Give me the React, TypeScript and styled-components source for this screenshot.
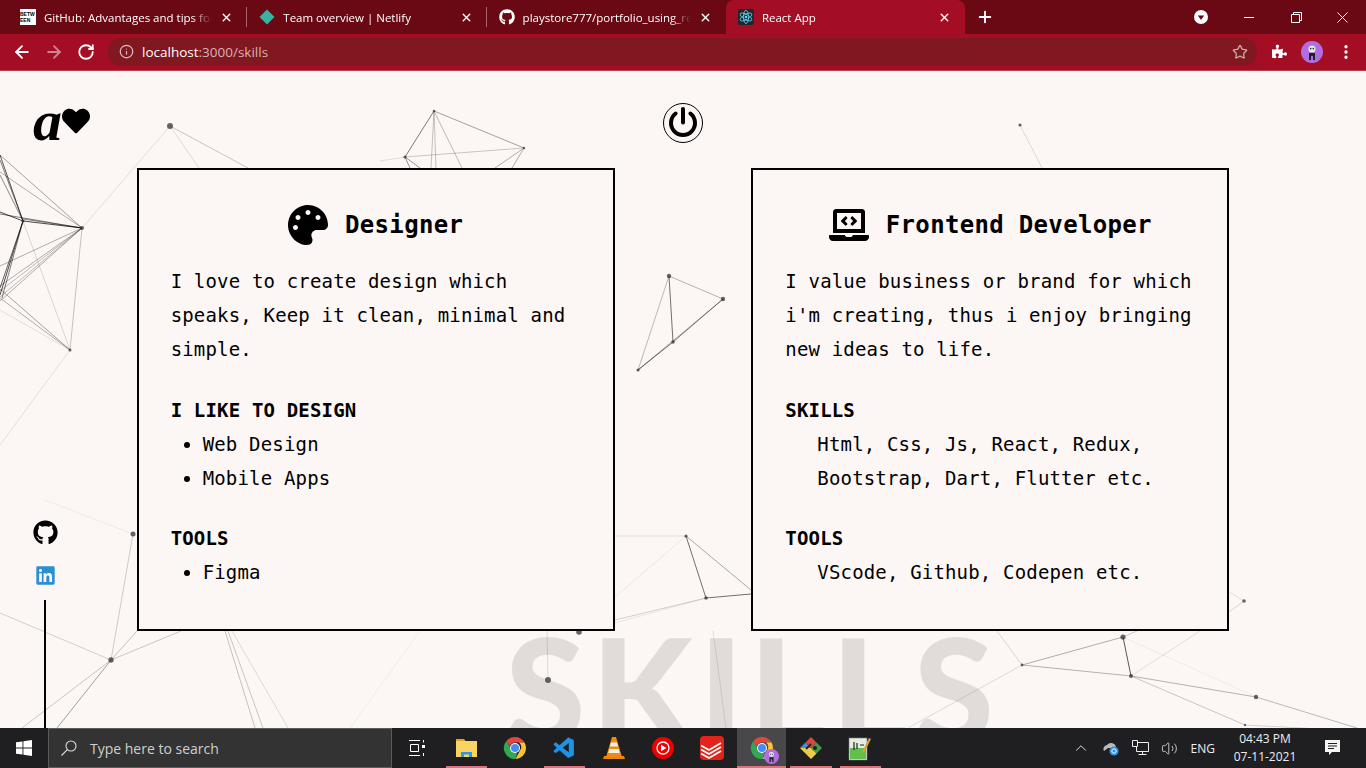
import React from "react";
import styled, { createGlobalStyle } from "styled-components";
import { ArrowLeft, ArrowRight, ChevronUp, Info, MoreVertical, Plus, RotateCw, Star, Volume2, X } from "lucide-react";
import { FaGithub, FaHeart, FaLaptopCode, FaLinkedin, FaPalette, FaPuzzlePiece } from "react-icons/fa";
import { VscVscode } from "react-icons/vsc";

const GlobalStyle = createGlobalStyle`
  html, body {
    margin: 0;
    padding: 0;
    height: 100%;
    overflow: hidden;
    background: #fcf6f4;
  }
  * {
    box-sizing: border-box;
  }
`;

// x1, y1, x2, y2, opacity (screen coordinates of the particle canvas)
const EDGES: number[][] = [
  [0, 155, 23, 221, 0.65], [0, 160, 23, 221, 0.5], [0, 175, 23, 221, 0.45], [0, 212, 23, 221, 0.7],
  [0, 214, 82, 228, 0.5], [23, 221, 82, 228, 0.7], [23, 219, 82, 228, 0.45], [0, 155, 82, 228, 0.35],
  [0, 172, 82, 228, 0.3], [23, 221, 0, 295, 0.7], [23, 221, 0, 288, 0.6], [23, 221, 2, 298, 0.5],
  [82, 228, 0, 266, 0.3], [82, 228, 0, 286, 0.3], [82, 228, 0, 291, 0.25], [82, 228, 0, 297, 0.25],
  [82, 228, 0, 301, 0.3], [0, 289, 70, 350, 0.35], [0, 298, 70, 350, 0.3], [0, 310, 70, 350, 0.1],
  [23, 221, 70, 350, 0.14], [82, 228, 70, 350, 0.22], [82, 228, 170, 126, 0.1], [70, 350, 0, 445, 0.1],
  [170, 126, 248, 168, 0.2], [170, 126, 199, 168, 0.12],
  [434, 111, 405, 157, 0.5], [434, 111, 524, 148, 0.35], [434, 111, 431, 168, 0.22], [434, 111, 436, 168, 0.22],
  [434, 111, 462, 168, 0.25], [405, 157, 524, 148, 0.2], [405, 157, 380, 161, 0.1], [405, 157, 420, 168, 0.4],
  [405, 157, 410, 168, 0.4], [524, 148, 495, 168, 0.3], [524, 148, 512, 168, 0.3],
  [669, 276, 723, 299, 0.28], [669, 276, 673, 342, 0.55], [723, 299, 673, 342, 0.5], [673, 342, 638, 370, 0.55],
  [669, 276, 638, 370, 0.25], [723, 299, 638, 370, 0.3],
  [1020, 125, 1042, 168, 0.12],
  [45, 500, 133, 534, 0.06], [133, 534, 111, 660, 0.18], [0, 613, 111, 660, 0.16], [111, 660, 137, 631, 0.22],
  [111, 660, 181, 631, 0.2], [111, 660, 22, 728, 0.2], [111, 660, 57, 728, 0.35],
  [225, 631, 255, 728, 0.22], [228, 631, 263, 728, 0.2], [232, 631, 288, 728, 0.12], [420, 631, 350, 728, 0.05],
  [548, 680, 547, 631, 0.12],
  [615, 536, 686, 536, 0.1], [686, 536, 706, 598, 0.55], [686, 536, 751, 590, 0.32], [706, 598, 751, 594, 0.55],
  [615, 620, 706, 598, 0.16], [615, 623, 706, 598, 0.08], [615, 597, 686, 536, 0.07], [713, 631, 726, 728, 0.1],
  [1123, 637, 1131, 676, 0.65], [1022, 665, 1123, 637, 0.3], [1022, 665, 1131, 676, 0.28], [1131, 676, 1256, 697, 0.28],
  [1131, 676, 1245, 725, 0.2], [1256, 697, 1357, 728, 0.25], [1245, 725, 1340, 730, 0.15], [1022, 665, 908, 728, 0.12],
  [1022, 665, 997, 631, 0.14], [1123, 637, 1256, 697, 0.05], [1131, 676, 1200, 631, 0.1], [1244, 601, 1229, 612, 0.14],
  [1229, 592, 1244, 601, 0.1], [1123, 637, 1137, 631, 0.18],
];

// x, y, radius
const NODES: number[][] = [
  [170, 126, 3], [82, 228, 2], [23, 221, 1.6], [70, 350, 1.5], [434, 111, 1.3], [405, 157, 1.6], [524, 148, 1.2],
  [669, 276, 2.2], [723, 299, 2.2], [673, 342, 1.8], [638, 370, 1.6], [1020, 125, 1.6], [133, 534, 2.5],
  [111, 660, 2.7], [579, 632, 2.8], [548, 680, 3], [686, 536, 1.6], [706, 598, 1.8], [1123, 637, 2.6],
  [1131, 676, 2], [1022, 665, 1.4], [1256, 697, 2.2], [1245, 725, 1.2], [1244, 601, 1.8],
];

const TABS = [
  { title: "GitHub: Advantages and tips for a", icon: "between" },
  { title: "Team overview | Netlify", icon: "netlify" },
  { title: "playstore777/portfolio_using_react", icon: "github" },
  { title: "React App", icon: "react", active: true },
];

function TabIcon({ name }: { name: string }) {
  if (name === "between") {
    return (
      <BetweenMark>
        <span>BETW</span>
        <span>EEN</span>
      </BetweenMark>
    );
  }
  if (name === "netlify") {
    return (
      <svg width="16" height="16" viewBox="0 0 16 16">
        <path d="M8 0.5 15.5 8 8 15.5 0.5 8z" fill="#37b3a3" />
      </svg>
    );
  }
  if (name === "github") {
    return <FaGithub size={16} color="#fff" />;
  }
  return (
    <svg width="16" height="16" viewBox="0 0 16 16">
      <rect width="16" height="16" rx="2" fill="#20262c" />
      <g fill="none" stroke="#5fd4f2" strokeWidth="0.8">
        <ellipse cx="8" cy="8" rx="2.6" ry="6.6" />
        <ellipse cx="8" cy="8" rx="2.6" ry="6.6" transform="rotate(60 8 8)" />
        <ellipse cx="8" cy="8" rx="2.6" ry="6.6" transform="rotate(120 8 8)" />
      </g>
      <circle cx="8" cy="8" r="1.3" fill="#5fd4f2" />
    </svg>
  );
}

function ChromeGlyph({ size = 24 }: { size?: number }) {
  return (
    <svg width={size} height={size} viewBox="0 0 24 24">
      <path d="M12 1a11 11 0 0 1 9.5 5.5H12a5.5 5.5 0 0 0-5.2 3.7L3.4 5A11 11 0 0 1 12 1z" fill="#e0483d" />
      <path d="M21.5 6.500a11 11 0 0 1-9 16.500l4.300-8.200a5.500 5.500 0 0 0-.8-8.300z" fill="#fbc52f" />
      <path d="M3.400 5l4.400 7.700a5.500 5.500 0 0 0 6.500 4.100L12.500 23A11 11 0 0 1 3.400 5z" fill="#33a853" />
      <circle cx="12" cy="12" r="5" fill="#fff" />
      <circle cx="12" cy="12" r="4" fill="#4b8bf5" />
    </svg>
  );
}

function Avatar({ size }: { size: number }) {
  return (
    <svg width={size} height={size} viewBox="0 0 22 22">
      <circle cx="11" cy="11" r="11" fill="#b06fe0" />
      <circle cx="11" cy="8" r="3.600" fill="#e8e4e4" />
      <circle cx="9.700" cy="7.600" r="0.800" fill="#222" />
      <circle cx="12.300" cy="7.600" r="0.800" fill="#222" />
      <path d="M8 12h6v7h-2v-4h-2v4H8z" fill="#222" />
    </svg>
  );
}

function AppIcon({ name }: { name: string }) {
  switch (name) {
    case "explorer":
      return (
        <svg width="24" height="24" viewBox="0 0 24 24">
          <path d="M2 3h8l2 2.500H2z" fill="#e0a21c" />
          <rect x="2" y="5" width="21" height="16" fill="#f9d364" />
          <path d="M7 21v-5h11v5h-3v-2.500h-5V21z" fill="#2f9ae0" />
        </svg>
      );
    case "chrome":
      return <ChromeGlyph />;
    case "vscode":
      return <VscVscode size={25} color="#1f92e4" />;
    case "vlc":
      return (
        <svg width="24" height="24" viewBox="0 0 24 24">
          <path d="M2 20h20l1 3H1z" fill="#e8860c" />
          <path d="M10 1h4l6 20H4z" fill="#f08a0c" />
          <path d="M9 6.500h6l1 4H8zM7.400 13h9.200l1 4H6.400z" fill="#f4f1ee" />
        </svg>
      );
    case "ytmusic":
      return (
        <svg width="24" height="24" viewBox="0 0 24 24">
          <circle cx="12" cy="12" r="11" fill="#ee0000" />
          <circle cx="12" cy="12" r="6" fill="none" stroke="#fff" strokeWidth="1.300" />
          <path d="M10 8.800 15.500 12 10 15.200z" fill="#fff" />
        </svg>
      );
    case "todoist":
      return (
        <svg width="24" height="24" viewBox="0 0 24 24">
          <rect width="24" height="24" rx="4" fill="#e3241b" />
          <g fill="none" stroke="#fff" strokeWidth="1.800">
            <path d="M1 9.500 9 14l12-7" />
            <path d="M1 13.500 9 18l12-7" />
            <path d="M1 17.500 9 22l12-7" />
          </g>
        </svg>
      );
    case "profile":
      return (
        <ProfileStack>
          <ChromeGlyph />
          <ProfileBadge>
            <Avatar size={15} />
          </ProfileBadge>
        </ProfileStack>
      );
    case "git":
      return (
        <svg width="24" height="24" viewBox="0 0 24 24">
          <path d="M12 12 1 12l5.500-5.500L12 12z" fill="#3f8fe6" />
          <path d="M6.500 6.500 12 12l5.500-5.500L12 1z" fill="#d4483f" />
          <path d="M12 12l5.500-5.500L23 12l-5.500 5.500z" fill="#3e9b46" />
          <path d="M1 12l5.500 5.500L12 12zM6.500 17.500 12 23l5.500-5.500L12 12z" fill="#eeca4a" />
          <path d="M7 13l5-5" stroke="#222" strokeWidth="2" />
          <circle cx="16" cy="12" r="2" fill="#222" />
        </svg>
      );
    default:
      return (
        <svg width="24" height="26" viewBox="0 0 24 26">
          <rect x="1" y="3" width="18" height="22" fill="#e4eee0" stroke="#777" strokeWidth="0.600" />
          <rect x="2" y="13" width="16" height="11" fill="#62bf4b" />
          <path d="M6 7v8M9 8v6M12 10h4" stroke="#222" strokeWidth="1.200" />
          <path d="M21 3 15 15l-1 3 3-2 6-12z" fill="#d8a03a" />
        </svg>
      );
  }
}

const APPS = [
  { name: "explorer", running: true },
  { name: "chrome" },
  { name: "vscode", running: true },
  { name: "vlc" },
  { name: "ytmusic" },
  { name: "todoist" },
  { name: "profile", running: true, active: true },
  { name: "git", running: true },
  { name: "notepad", running: true },
];

export default function App() {
  return (
    <>
      <GlobalStyle />
      <Screen>
        <TabStrip>
          {TABS.map((tab, i) => (
            <Tab key={tab.title} $active={tab.active} $divider={i < 2}>
              <TabIcon name={tab.icon} />
              <TabTitle>{tab.title}</TabTitle>
              <TabClose>
                <X size={13} strokeWidth={2.6} />
              </TabClose>
            </Tab>
          ))}
          <NewTab>
            <Plus size={18} strokeWidth={2.6} />
          </NewTab>
          <WindowControls>
            <ProfileDrop>
              <svg width="14" height="14" viewBox="0 0 14 14">
                <circle cx="7" cy="7" r="7" fill="#fff" />
                <path d="M3.800 5.600h6.400L7 10z" fill="#6a0914" />
              </svg>
            </ProfileDrop>
            <WindowButton>
              <svg width="11" height="11" viewBox="0 0 11 11">
                <path d="M0 5.500h10" stroke="#fff" />
              </svg>
            </WindowButton>
            <WindowButton>
              <svg width="11" height="11" viewBox="0 0 11 11">
                <path d="M0.500 2.500h8v8h-8zM2.500 2.500v-2h8v8h-2" fill="none" stroke="#fff" />
              </svg>
            </WindowButton>
            <WindowButton>
              <svg width="11" height="11" viewBox="0 0 11 11">
                <path d="M0.500 0.500l10 10M10.500 0.500l-10 10" stroke="#fff" />
              </svg>
            </WindowButton>
          </WindowControls>
        </TabStrip>

        <Toolbar>
          <NavButton>
            <ArrowLeft size={20} strokeWidth={2.2} />
          </NavButton>
          <NavButton $dim>
            <ArrowRight size={20} strokeWidth={2.2} />
          </NavButton>
          <NavButton>
            <RotateCw size={18} strokeWidth={2.4} />
          </NavButton>
          <AddressBar>
            <Info size={15} color="#d9bcc0" />
            <Url>
              localhost<UrlRest>:3000/skills</UrlRest>
            </Url>
            <Star size={16} color="#c9a7ac" />
          </AddressBar>
          <ToolbarEnd>
            <FaPuzzlePiece size={15} color="#fff" />
            <Avatar size={22} />
            <MoreVertical size={18} color="#fff" strokeWidth={2.4} />
          </ToolbarEnd>
        </Toolbar>

        <Page>
          <WatermarkTitle>SKILLS</WatermarkTitle>
          <Network viewBox="0 71 1366 657">
            {EDGES.map(([x1, y1, x2, y2, o], i) => (
              <line key={i} x1={x1} y1={y1} x2={x2} y2={y2} stroke="#000" strokeOpacity={o} strokeWidth="1" />
            ))}
            {NODES.map(([cx, cy, r], i) => (
              <circle key={i} cx={cx} cy={cy} r={r} fill="#333" fillOpacity="0.75" />
            ))}
          </Network>

          <Logo>
            <LogoLetter>a</LogoLetter>
            <FaHeart size={28} />
          </Logo>

          <PowerButton>
            <svg width="40" height="40" viewBox="0 0 40 40">
              <circle cx="20" cy="20" r="19.500" fill="none" stroke="#000" />
              <path d="M12.600 10.500a12 12 0 1 0 14.800 0" fill="none" stroke="#000" strokeWidth="4" strokeLinecap="round" />
              <path d="M20 6v13.500" stroke="#000" strokeWidth="4" strokeLinecap="round" />
            </svg>
          </PowerButton>

          <SocialRail>
            <FaGithub size={25} color="#000" />
            <FaLinkedin size={21} color="#2b8fd4" />
            <RailLine />
          </SocialRail>

          <Cards>
            <Card>
              <CardTitle>
                <FaPalette size={40} />
                <span>Designer</span>
              </CardTitle>
              <CardText>I love to create design which speaks, Keep it clean, minimal and simple.</CardText>
              <SectionHead>I LIKE TO DESIGN</SectionHead>
              <BulletList>
                <li>Web Design</li>
                <li>Mobile Apps</li>
              </BulletList>
              <SectionHead>TOOLS</SectionHead>
              <BulletList>
                <li>Figma</li>
              </BulletList>
            </Card>
            <Card>
              <CardTitle>
                <FaLaptopCode size={40} />
                <span>Frontend Developer</span>
              </CardTitle>
              <CardText>I value business or brand for which i'm creating, thus i enjoy bringing new ideas to life.</CardText>
              <SectionHead>SKILLS</SectionHead>
              <IndentText>Html, Css, Js, React, Redux, Bootstrap, Dart, Flutter etc.</IndentText>
              <SectionHead>TOOLS</SectionHead>
              <IndentText>VScode, Github, Codepen etc.</IndentText>
            </Card>
          </Cards>
        </Page>

        <Taskbar>
          <StartButton>
            <svg width="16" height="16" viewBox="0 0 16 16" fill="#fff">
              <path d="M0 2.300 6.500 1.400v6.200H0zM7.400 1.300 16 0v7.600H7.400zM0 8.400h6.500v6.200L0 13.700zM7.400 8.400H16V16l-8.600-1.300z" />
            </svg>
          </StartButton>
          <SearchBox>
            <svg width="16" height="16" viewBox="0 0 16 16" fill="none" stroke="#ddd" strokeWidth="1.100">
              <circle cx="10" cy="6" r="5" />
              <path d="M6.300 9.700 0.500 15.500" />
            </svg>
            <span>Type here to search</span>
          </SearchBox>
          <TaskView>
            <svg width="16" height="16" viewBox="0 0 16 16" fill="none" stroke="#fff">
              <path d="M0 0.500h11M0 15.500h11M1.500 4.500h8v7h-8z" />
              <path d="M14.500 0v2.500M14.500 13v3" />
              <rect x="13" y="5" width="3" height="3" fill="#fff" stroke="none" />
            </svg>
          </TaskView>
          {APPS.map((app) => (
            <AppButton key={app.name} $active={app.active} $running={app.running}>
              <AppIcon name={app.name} />
            </AppButton>
          ))}
          <Tray>
            <ChevronUp size={18} strokeWidth={1.2} color="#eee" />
            <svg width="18" height="16" viewBox="0 0 18 16">
              <path d="M2 11a4 4 0 0 1 3-6 5 5 0 0 1 9 3H6z" fill="#b8bcc0" />
              <circle cx="12" cy="11" r="4.600" fill="#2f8fe0" />
              <path d="M9.800 11a2.200 2.200 0 0 1 4.400 0M14.200 11a2.200 2.200 0 0 1-4.400 0" fill="none" stroke="#fff" />
            </svg>
            <svg width="17" height="16" viewBox="0 0 17 16" fill="none" stroke="#eee">
              <path d="M4.500 2.500h12v9h-12zM10.500 11.500v3M6.500 14.500h8" />
              <path d="M0.500 0.500h5v6h-5z" fill="#1f1f21" />
            </svg>
            <Volume2 size={17} strokeWidth={1.1} color="#eee" />
            <TrayLabel>ENG</TrayLabel>
            <Clock>
              <span>04:43 PM</span>
              <span>07-11-2021</span>
            </Clock>
            <svg width="18" height="16" viewBox="0 0 18 16">
              <path d="M1 0h15v12H8l-3 3v-3H1z" fill="#f4f4f4" />
              <path d="M4 3.500h9M4 6h9M4 8.500h6" stroke="#1f1f21" />
            </svg>
          </Tray>
        </Taskbar>
      </Screen>
    </>
  );
}

const Screen = styled.div`
  display: flex;
  flex-direction: column;
  width: 1366px;
  height: 768px;
  overflow: hidden;
  background: #fcf6f4;
`;

const TabStrip = styled.div`
  display: flex;
  align-items: stretch;
  flex: 0 0 34px;
  padding-left: 8px;
  background: #6a0914;
  font-family: "Open Sans", sans-serif;
  font-size: 11.5px;
  color: #fff;
`;

const Tab = styled.div<{ $active?: boolean; $divider?: boolean }>`
  position: relative;
  display: flex;
  align-items: center;
  gap: 8px;
  width: 239.300px;
  padding: 0 14px 0 12px;
  background: ${(p) => (p.$active ? "#a30e24" : "transparent")};
  border-radius: ${(p) => (p.$active ? "8px 8px 0 0" : "0")};

  ${(p) =>
    p.$divider &&
    `&::after {
      content: "";
      position: absolute;
      right: 0;
      top: 7px;
      bottom: 7px;
      width: 1px;
      background: #a3656c;
    }`}
`;

const BetweenMark = styled.div`
  display: flex;
  flex: 0 0 16px;
  flex-direction: column;
  justify-content: center;
  height: 16px;
  overflow: hidden;
  background: #fff;
  color: #000;
  font-family: "Liberation Sans", sans-serif;
  font-size: 5px;
  font-weight: 700;
  line-height: 6px;
`;

const TabTitle = styled.span`
  flex: 1;
  min-width: 0;
  overflow: hidden;
  white-space: nowrap;
  -webkit-mask-image: linear-gradient(to right, #000 88%, transparent 100%);
  mask-image: linear-gradient(to right, #000 88%, transparent 100%);
`;

const TabClose = styled.span`
  display: flex;
  flex: 0 0 13px;
`;

const NewTab = styled.div`
  display: flex;
  align-items: center;
  margin-left: 11px;
  color: #fff;
`;

const WindowControls = styled.div`
  display: flex;
  align-items: center;
  margin-left: auto;
`;

const ProfileDrop = styled.div`
  display: flex;
  margin-right: 19px;
`;

const WindowButton = styled.div`
  display: flex;
  justify-content: center;
  width: 46.500px;
`;

const Toolbar = styled.div`
  display: flex;
  align-items: center;
  flex: 0 0 37px;
  padding: 0 0 1px 6px;
  background: #a30e24;
  border-bottom: 1px solid #b9414f;
`;

const NavButton = styled.div<{ $dim?: boolean }>`
  display: flex;
  justify-content: center;
  width: 32px;
  color: ${(p) => (p.$dim ? "#d3838f" : "#fff")};
`;

const AddressBar = styled.div`
  display: flex;
  align-items: center;
  gap: 8px;
  width: 1149px;
  height: 28px;
  margin-left: 6px;
  padding: 0 9px 0 11px;
  border-radius: 14px;
  background: #81171f;
`;

const Url = styled.span`
  flex: 1;
  font-family: "Open Sans", sans-serif;
  font-size: 13.500px;
  color: #fff;
`;

const UrlRest = styled.span`
  color: #d6b3b8;
`;

const ToolbarEnd = styled.div`
  display: flex;
  align-items: center;
  gap: 14px;
  margin-left: 15px;
`;

const Page = styled.main`
  position: relative;
  flex: 1;
  min-height: 0;
  overflow: hidden;
`;

const WatermarkTitle = styled.div`
  position: absolute;
  left: 505px;
  top: 545px;
  font-family: Lato, sans-serif;
  font-size: 146px;
  font-weight: 900;
  line-height: 1;
  letter-spacing: 6px;
  color: #e1dcd9;
`;

const Network = styled.svg`
  position: absolute;
  inset: 0;
  width: 1366px;
  height: 657px;
`;

const Logo = styled.div`
  position: absolute;
  left: 33px;
  top: 30px;
  display: flex;
  align-items: center;
  height: 40px;
  color: #000;
`;

const LogoLetter = styled.span`
  font-family: "Liberation Serif", serif;
  font-size: 58px;
  font-style: italic;
  font-weight: 700;
  line-height: 40px;
`;

const PowerButton = styled.div`
  position: absolute;
  left: 663px;
  top: 32px;
  display: flex;
`;

const SocialRail = styled.div`
  position: absolute;
  left: 25px;
  bottom: 0;
  display: flex;
  flex-direction: column;
  align-items: center;
  gap: 20px;
  width: 40px;
`;

const RailLine = styled.div`
  width: 2px;
  height: 128px;
  margin-top: -6px;
  background: #000;
`;

const Cards = styled.div`
  position: relative;
  display: flex;
  justify-content: space-evenly;
  padding-top: 97px;
`;

const Card = styled.section`
  width: 478px;
  height: 463px;
  padding: 35px 32px 0;
  border: 2px solid #000;
  background: #fcf6f4;
  color: #000;
  font-family: "DejaVu Sans Mono", monospace;
  font-size: 19px;
  line-height: 34px;
  letter-spacing: 0.17px;
`;

const CardTitle = styled.h2`
  display: flex;
  align-items: center;
  justify-content: center;
  gap: 17px;
  height: 40px;
  margin: 0 0 19px;
  font-size: 24px;
  font-weight: 700;
  letter-spacing: 0.33px;
  line-height: 40px;
`;

const CardText = styled.p`
  margin: 0;
`;

const SectionHead = styled.h3`
  margin: 26.500px 0 0;
  font-size: 19px;
  font-weight: 700;
  line-height: 34px;
`;

const BulletList = styled.ul`
  margin: 0;
  padding: 0 0 0 32px;
`;

const IndentText = styled.p`
  margin: 0;
  padding-left: 32px;
`;

const Taskbar = styled.footer`
  position: relative;
  display: flex;
  align-items: center;
  flex: 0 0 40px;
  background: #1f1f21;
`;

const StartButton = styled.div`
  display: flex;
  justify-content: center;
  width: 48px;
`;

const SearchBox = styled.div`
  display: flex;
  align-items: center;
  gap: 13px;
  width: 344px;
  height: 40px;
  padding-left: 12px;
  background: #333334;
  border: 1px solid #5c5c5c;
  color: #cfcfcf;
  font-family: "Open Sans", sans-serif;
  font-size: 14px;
`;

const TaskView = styled.div`
  display: flex;
  justify-content: center;
  width: 49.500px;
`;

const AppButton = styled.div<{ $active?: boolean; $running?: boolean }>`
  position: relative;
  display: flex;
  align-items: center;
  justify-content: center;
  width: 49.250px;
  height: 40px;
  background: ${(p) => (p.$active ? "#48484a" : "transparent")};

  ${(p) =>
    p.$running &&
    `&::after {
      content: "";
      position: absolute;
      left: ${p.$active ? "0" : "4px"};
      right: ${p.$active ? "0" : "4px"};
      bottom: 0;
      height: 2px;
      background: #e0717c;
    }`}
`;

const ProfileStack = styled.div`
  position: relative;
  display: flex;
`;

const ProfileBadge = styled.div`
  position: absolute;
  right: -5px;
  bottom: -4px;
  display: flex;
`;

const Tray = styled.div`
  display: flex;
  align-items: center;
  gap: 12px;
  margin-left: auto;
  padding-right: 24px;
  color: #eee;
  font-family: "Open Sans", sans-serif;
  font-size: 12px;
`;

const TrayLabel = styled.span`
  margin-left: 1px;
  margin-right: 2px;
`;

const Clock = styled.div`
  display: flex;
  flex-direction: column;
  align-items: center;
  width: 72px;
  margin-right: 11px;
  line-height: 18px;
`;
